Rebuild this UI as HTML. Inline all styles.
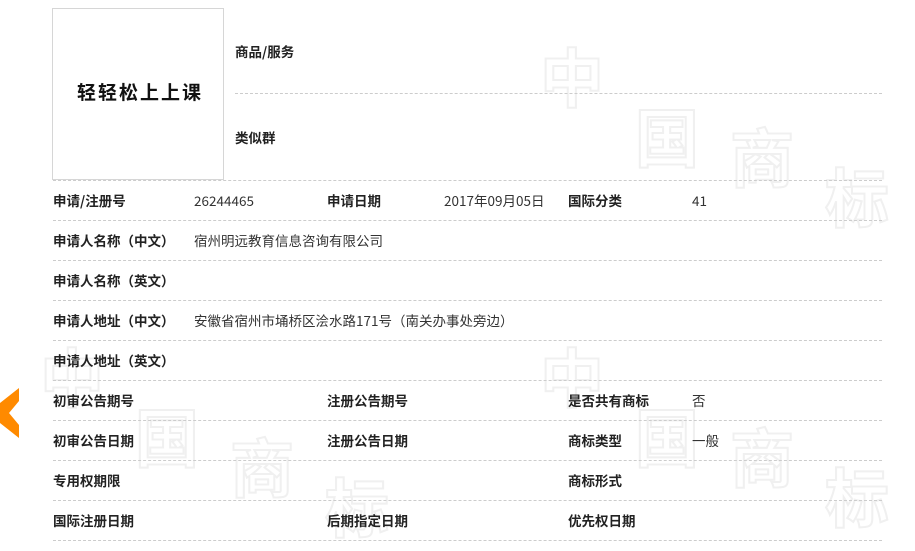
<!DOCTYPE html>
<html><head><meta charset="utf-8"><style>
body{margin:0;width:915px;height:546px;background:#fff;position:relative;overflow:hidden;font-family:"Noto Sans CJK SC","Liberation Sans",sans-serif;font-size:13.5px;color:#333}
.a{position:absolute;white-space:nowrap;line-height:20px}
.b{font-weight:bold;color:#222}
.l{position:absolute;left:53px;width:829px;border-top:1px dashed #ccc;height:0}
.wm{position:absolute;color:#fff;-webkit-text-stroke:2px #f0f0f0;font-size:64px;font-weight:bold;font-family:"Noto Sans CJK SC",sans-serif;line-height:70px}
</style></head><body>
<div class="wm" style="left:540px;top:40px">中</div>
<div class="wm" style="left:635px;top:100px">国</div>
<div class="wm" style="left:730px;top:120px">商</div>
<div class="wm" style="left:825px;top:160px">标</div>
<div class="wm" style="left:40px;top:340px">中</div>
<div class="wm" style="left:135px;top:400px">国</div>
<div class="wm" style="left:230px;top:430px">商</div>
<div class="wm" style="left:325px;top:470px">标</div>
<div class="wm" style="left:540px;top:340px">中</div>
<div class="wm" style="left:635px;top:400px">国</div>
<div class="wm" style="left:730px;top:420px">商</div>
<div class="wm" style="left:825px;top:460px">标</div>
<div class="a" style="left:52px;top:8px;width:170px;height:170px;border:1px solid #d6d6d6;background:#fff"></div>
<div class="a b" style="left:77px;top:80px;font-size:19px;letter-spacing:2px;color:#111;line-height:24px">轻轻松上上课</div>
<div class="a b" style="left:235px;top:41px">商品/服务</div>
<div class="a" style="left:235px;top:93px;width:647px;border-top:1px dashed #ccc"></div>
<div class="a b" style="left:235px;top:127px">类似群</div>
<div class="l" style="top:180px"></div>
<div class="l" style="top:220px"></div>
<div class="l" style="top:260px"></div>
<div class="l" style="top:300px"></div>
<div class="l" style="top:340px"></div>
<div class="l" style="top:380px"></div>
<div class="l" style="top:420px"></div>
<div class="l" style="top:460px"></div>
<div class="l" style="top:500px"></div>
<div class="l" style="top:540px"></div>
<div class="a b" style="left:53px;top:190px">申请/注册号</div>
<div class="a" style="left:194px;top:190px">26244465</div>
<div class="a b" style="left:327px;top:190px">申请日期</div>
<div class="a" style="left:444px;top:190px">2017年09月05日</div>
<div class="a b" style="left:568px;top:190px">国际分类</div>
<div class="a" style="left:692px;top:190px">41</div>
<div class="a b" style="left:53px;top:230px">申请人名称（中文）</div>
<div class="a" style="left:194px;top:230px">宿州明远教育信息咨询有限公司</div>
<div class="a b" style="left:53px;top:270px">申请人名称（英文）</div>
<div class="a b" style="left:53px;top:310px">申请人地址（中文）</div>
<div class="a" style="left:194px;top:310px">安徽省宿州市埇桥区浍水路171号（南关办事处旁边）</div>
<div class="a b" style="left:53px;top:350px">申请人地址（英文）</div>
<div class="a b" style="left:53px;top:390px">初审公告期号</div>
<div class="a b" style="left:327px;top:390px">注册公告期号</div>
<div class="a b" style="left:568px;top:390px">是否共有商标</div>
<div class="a" style="left:692px;top:390px">否</div>
<div class="a b" style="left:53px;top:430px">初审公告日期</div>
<div class="a b" style="left:327px;top:430px">注册公告日期</div>
<div class="a b" style="left:568px;top:430px">商标类型</div>
<div class="a" style="left:692px;top:430px">一般</div>
<div class="a b" style="left:53px;top:470px">专用权期限</div>
<div class="a b" style="left:568px;top:470px">商标形式</div>
<div class="a b" style="left:53px;top:510px">国际注册日期</div>
<div class="a b" style="left:327px;top:510px">后期指定日期</div>
<div class="a b" style="left:568px;top:510px">优先权日期</div>
<svg class="a" style="left:0;top:385px" width="20" height="56"><polygon points="19,3 19,16 9,28 19,40 19,53 0,38 0,18" fill="#ff8a00"/></svg>
</body></html>
